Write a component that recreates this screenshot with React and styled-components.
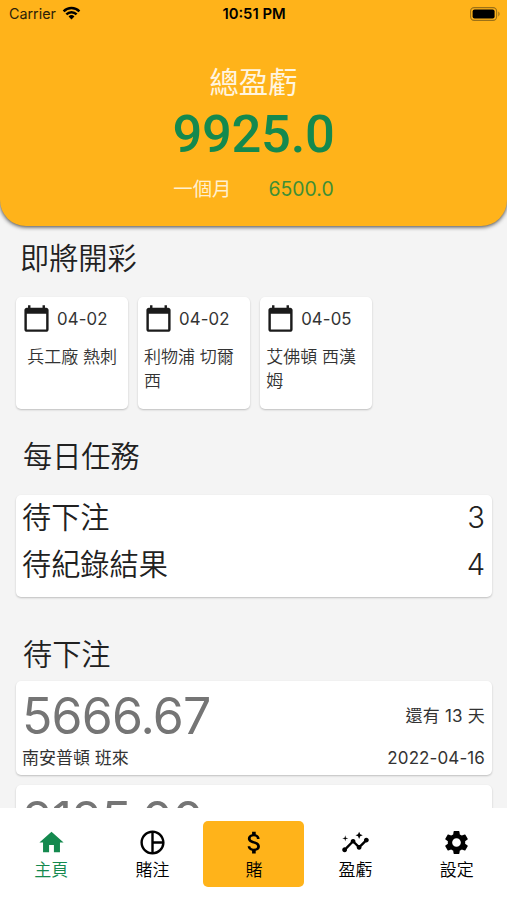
import React from 'react';
import styled, { createGlobalStyle } from 'styled-components';
import {
  MdAttachMoney,
  MdCalendarToday,
  MdHome,
  MdInsights,
  MdOutlinePieChart,
  MdSettings,
} from 'react-icons/md';

const matches = [
  { date: '04-02', teams: '兵工廠 熱刺', centered: true },
  { date: '04-02', teams: '利物浦 切爾西' },
  { date: '04-05', teams: '艾佛頓 西漢姆' },
];

const tasks = [
  { label: '待下注', count: 3 },
  { label: '待紀錄結果', count: 4 },
];

const bets = [
  { amount: '5666.67', teams: '南安普頓 班來', left: '還有 13 天', date: '2022-04-16' },
  { amount: '2125.00', teams: '', left: '', date: '' },
];

const tabs = [
  { label: '主頁', icon: MdHome, color: '#14894e' },
  { label: '賭注', icon: MdOutlinePieChart },
  { label: '賭', icon: MdAttachMoney, highlighted: true },
  { label: '盈虧', icon: MdInsights },
  { label: '設定', icon: MdSettings },
];

const WifiIcon = () => (
  <svg width="19" height="14.3" viewBox="0 0 20 15">
    <path d="M10 14.2 6.9 11a4.4 4.4 0 0 1 6.2 0Z" />
    <path d="M4.6 8.7a7.6 7.6 0 0 1 10.8 0M1.7 5.6a11.8 11.8 0 0 1 16.6 0" fill="none" stroke="#000" strokeWidth="2.6" />
  </svg>
);

const BatteryIcon = () => (
  <svg width="31" height="14" viewBox="0 0 31 14">
    <rect x="0.6" y="0.6" width="26" height="12.8" rx="3.6" fill="none" stroke="#9c7117" strokeWidth="1.1" />
    <rect x="2.6" y="2.6" width="22" height="8.8" rx="2" />
    <path d="M28.3 4.6v4.8c1.7-.7 1.7-4.1 0-4.8Z" fill="#9c7117" />
  </svg>
);

const App = () => {
  return (
    <Screen>
      <GlobalStyle />
      <Header>
        <StatusBar>
          <Carrier>
            Carrier
            <WifiIcon />
          </Carrier>
          <Clock>10:51 PM</Clock>
          <Battery>
            <BatteryIcon />
          </Battery>
        </StatusBar>
        <HeaderTitle>總盈虧</HeaderTitle>
        <Total>9925.0</Total>
        <Period>
          <span>一個月</span>
          <PeriodAmount>6500.0</PeriodAmount>
        </Period>
      </Header>

      <Content>
        <SectionTitle $indent={20} $height={71} $top={1}>即將開彩</SectionTitle>
        <MatchList>
          {matches.map((match, i) => (
            <MatchCard key={i}>
              <MatchDate>
                <MdCalendarToday size={29} color="#1b1b1b" />
                <span>{match.date}</span>
              </MatchDate>
              <MatchTeams $centered={match.centered}>{match.teams}</MatchTeams>
            </MatchCard>
          ))}
        </MatchList>

        <SectionTitle $indent={23} $height={86} $top={16}>每日任務</SectionTitle>
        <TaskCard>
          {tasks.map((task) => (
            <TaskRow key={task.label}>
              <span>{task.label}</span>
              <span>{task.count}</span>
            </TaskRow>
          ))}
        </TaskCard>

        <SectionTitle $indent={23} $height={84} $top={26}>待下注</SectionTitle>
        <BetList>
          {bets.map((bet) => (
            <BetCard key={bet.amount}>
              <BetRow>
                <BetAmount>{bet.amount}</BetAmount>
                <DaysLeft>{bet.left}</DaysLeft>
              </BetRow>
              <BetRow>
                <span>{bet.teams}</span>
                <BetDate>{bet.date}</BetDate>
              </BetRow>
            </BetCard>
          ))}
        </BetList>
      </Content>

      <NavBar>
        {tabs.map(({ label, icon: Icon, color, highlighted }) => (
          <NavItem key={label} $color={color} $highlighted={highlighted}>
            <Icon size={29} />
            {label}
          </NavItem>
        ))}
      </NavBar>
    </Screen>
  );
};

export default App;

const GlobalStyle = createGlobalStyle`
  * {
    box-sizing: border-box;
  }
  body {
    margin: 0;
    font-family: Inter, 'Noto Sans CJK TC', sans-serif;
  }
  svg {
    display: block;
    flex-shrink: 0;
  }
`;

const Screen = styled.div`
  display: flex;
  flex-direction: column;
  width: 507px;
  height: 900px;
  overflow: hidden;
  background-color: #f4f4f4;
  color: #212121;
`;

const Header = styled.header`
  display: flex;
  flex-direction: column;
  align-items: center;
  flex-shrink: 0;
  height: 226px;
  border-radius: 0 0 26px 26px;
  background-color: #ffb31a;
  box-shadow: 0 1px 4px rgba(0, 0, 0, 0.75);
`;

const StatusBar = styled.div`
  display: grid;
  grid-template-columns: 1fr auto 1fr;
  align-items: center;
  width: 100%;
  height: 27px;
  padding: 0 6px 0 9px;
  color: #000;
`;

const Carrier = styled.div`
  display: flex;
  align-items: center;
  gap: 6px;
  font-size: 14.3px;
  color: #2b2108;
`;

const Clock = styled.div`
  margin-right: 2px;
  font-size: 14.8px;
  font-weight: 600;
`;

const Battery = styled.div`
  display: flex;
  justify-content: flex-end;
`;

const HeaderTitle = styled.div`
  margin-top: 34px;
  font-size: 29.4px;
  line-height: 44px;
  color: #fff5e0;
`;

const Total = styled.div`
  height: 60px;
  font-family: Roboto, sans-serif;
  font-size: 52.5px;
  line-height: 58px;
  font-weight: 500;
  letter-spacing: -0.3px;
  color: #14894e;
`;

const Period = styled.div`
  display: flex;
  align-items: center;
  gap: 37px;
  margin-top: 10px;
  font-size: 19.4px;
  line-height: 28px;
  color: #fff0d0;
`;

const PeriodAmount = styled.span`
  color: #3f8f35;
`;

const Content = styled.main`
  flex: 1;
  min-height: 0;
  overflow: hidden;
  padding: 0 15px 0 16px;
`;

const SectionTitle = styled.h2`
  height: ${(props) => props.$height}px;
  margin: 0 0 0 ${(props) => props.$indent - 16}px;
  padding-top: ${(props) => props.$top}px;
  font-size: 29.2px;
  line-height: 64px;
  font-weight: 350;
`;

const Card = styled.div`
  border-radius: 5px;
  background-color: #fff;
  box-shadow: 0 1px 2px rgba(0, 0, 0, 0.22);
`;

const MatchList = styled.div`
  display: flex;
  gap: 9.8px;
`;

const MatchCard = styled(Card)`
  width: 112.3px;
  height: 112px;
  padding: 7px 6px;
`;

const MatchDate = styled.div`
  display: flex;
  align-items: center;
  gap: 6px;
  height: 29px;
  font-size: 16.8px;
  letter-spacing: 0.1px;
  color: #333;
`;

const MatchTeams = styled.div`
  margin-top: 12px;
  font-size: 17px;
  line-height: 24px;
  font-weight: 350;
  color: #333;
  word-break: break-all;
  text-align: ${(props) => (props.$centered ? 'center' : 'left')};
`;

const TaskCard = styled(Card)`
  height: 102px;
  padding: 0 7px 0 6px;
`;

const TaskRow = styled.div`
  display: flex;
  justify-content: space-between;
  height: 46.5px;
  font-size: 29.2px;
  line-height: 46px;
  font-weight: 350;
`;

const BetList = styled.div`
  display: flex;
  flex-direction: column;
  gap: 10px;
`;

const BetCard = styled(Card)`
  height: 94px;
  padding: 6px 7px 0 6px;
`;

const BetRow = styled.div`
  display: flex;
  align-items: center;
  justify-content: space-between;
  font-size: 17px;
  line-height: 26px;
  color: #333;
`;

const BetAmount = styled.div`
  font-size: 50px;
  line-height: 58px;
  letter-spacing: -0.8px;
  color: #757575;
`;

const DaysLeft = styled.span`
  letter-spacing: 0.2px;
`;

const BetDate = styled.span`
  letter-spacing: 0.1px;
`;

const NavBar = styled.nav`
  display: flex;
  flex-shrink: 0;
  height: 92px;
  padding-top: 13px;
  background-color: #fff;
`;

const NavItem = styled.div`
  display: flex;
  flex: 1;
  flex-direction: column;
  align-items: center;
  height: 66px;
  padding-top: 7px;
  padding-left: 1px;
  border-radius: 5px;
  font-size: 17px;
  line-height: 26px;
  font-weight: 350;
  color: ${(props) => props.$color || '#000'};
  background-color: ${(props) => (props.$highlighted ? '#ffb31a' : 'transparent')};
`;
